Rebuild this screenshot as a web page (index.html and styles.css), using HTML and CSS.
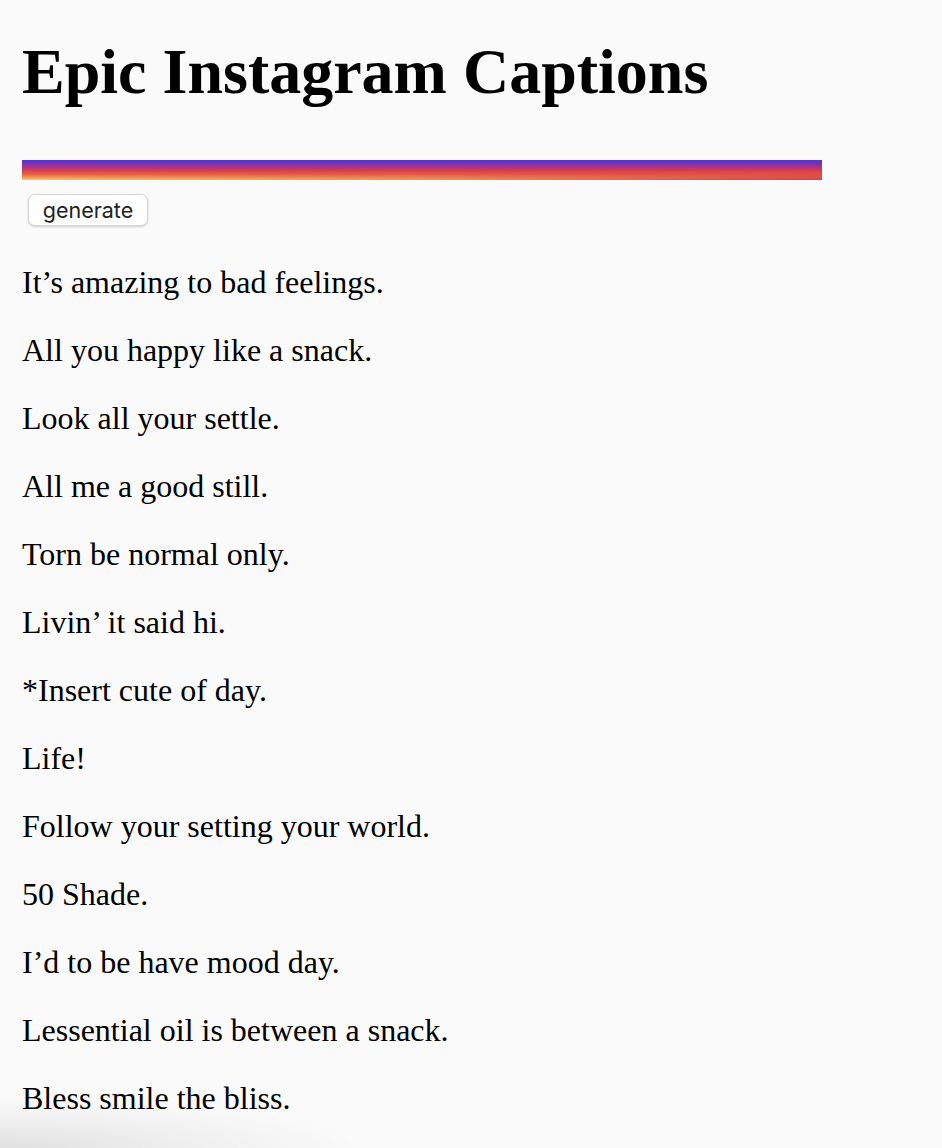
FILE: index.html
```html
<!DOCTYPE html>
<html lang="en">
<head>
<meta charset="utf-8">
<title>Epic Instagram Captions</title>
<link rel="stylesheet" href="styles.css">
</head>
<body>
<main class="page">
  <h1 class="title">Epic Instagram Captions</h1>
  <div class="bar"></div>
  <button class="generate" type="button">generate</button>
  <section class="captions">
    <p class="caption">It’s amazing to bad feelings.</p>
    <p class="caption">All you happy like a snack.</p>
    <p class="caption">Look all your settle.</p>
    <p class="caption">All me a good still.</p>
    <p class="caption">Torn be normal only.</p>
    <p class="caption">Livin’ it said hi.</p>
    <p class="caption">*Insert cute of day.</p>
    <p class="caption">Life!</p>
    <p class="caption">Follow your setting your world.</p>
    <p class="caption">50 Shade.</p>
    <p class="caption">I’d to be have mood day.</p>
    <p class="caption">Lessential oil is between a snack.</p>
    <p class="caption">Bless smile the bliss.</p>
  </section>
</main>
<div class="corner-shadow"></div>
</body>
</html>
```

FILE: styles.css
```css
html, body {
  margin: 0;
  padding: 0;
  background: #fafafa;
  height: 100%;
  overflow: hidden;
}

.page {
  padding: 24px 22px 0 22px;
  font-family: "Liberation Serif", "Times New Roman", serif;
  color: #000;
}

.title {
  margin: 0;
  font-size: 64px;
  line-height: 96px;
  font-weight: bold;
}

.bar {
  position: relative;
  margin-top: 40px;
  width: 800px;
  height: 20px;
  background: linear-gradient(to bottom,
    #4a38d2 0%,
    #8a2fa8 22%,
    #d43a55 50%,
    #e8653c 72%,
    #f5c96e 100%);
}

.bar::after {
  content: "";
  position: absolute;
  inset: 0;
  background: linear-gradient(to right, rgba(214, 56, 72, 0) 0%, rgba(214, 56, 72, 0.35) 50%, rgba(214, 56, 72, 1) 100%);
  -webkit-mask-image: linear-gradient(to bottom, transparent 40%, #000 100%);
  mask-image: linear-gradient(to bottom, transparent 40%, #000 100%);
}

.generate {
  display: block;
  margin: 14px 0 0 6px;
  width: 120px;
  height: 32px;
  padding: 0;
  border: 1px solid #d6d6d6;
  border-radius: 7px;
  background: #fff;
  box-shadow: 0 1px 2px rgba(0, 0, 0, 0.18);
  font-family: "Inter", "Liberation Sans", sans-serif;
  font-size: 21.5px;
  color: #222;
}

.captions {
  margin-top: 38px;
}

.caption {
  margin: 0 0 32px 0;
  font-size: 32px;
  line-height: 36px;
}

.corner-shadow {
  position: fixed;
  left: 0;
  bottom: 0;
  width: 420px;
  height: 60px;
  pointer-events: none;
  background: radial-gradient(ellipse 360px 50px at 0 100%, rgba(0, 0, 0, 0.10) 0%, rgba(0, 0, 0, 0.04) 55%, rgba(0, 0, 0, 0) 100%);
}
```
